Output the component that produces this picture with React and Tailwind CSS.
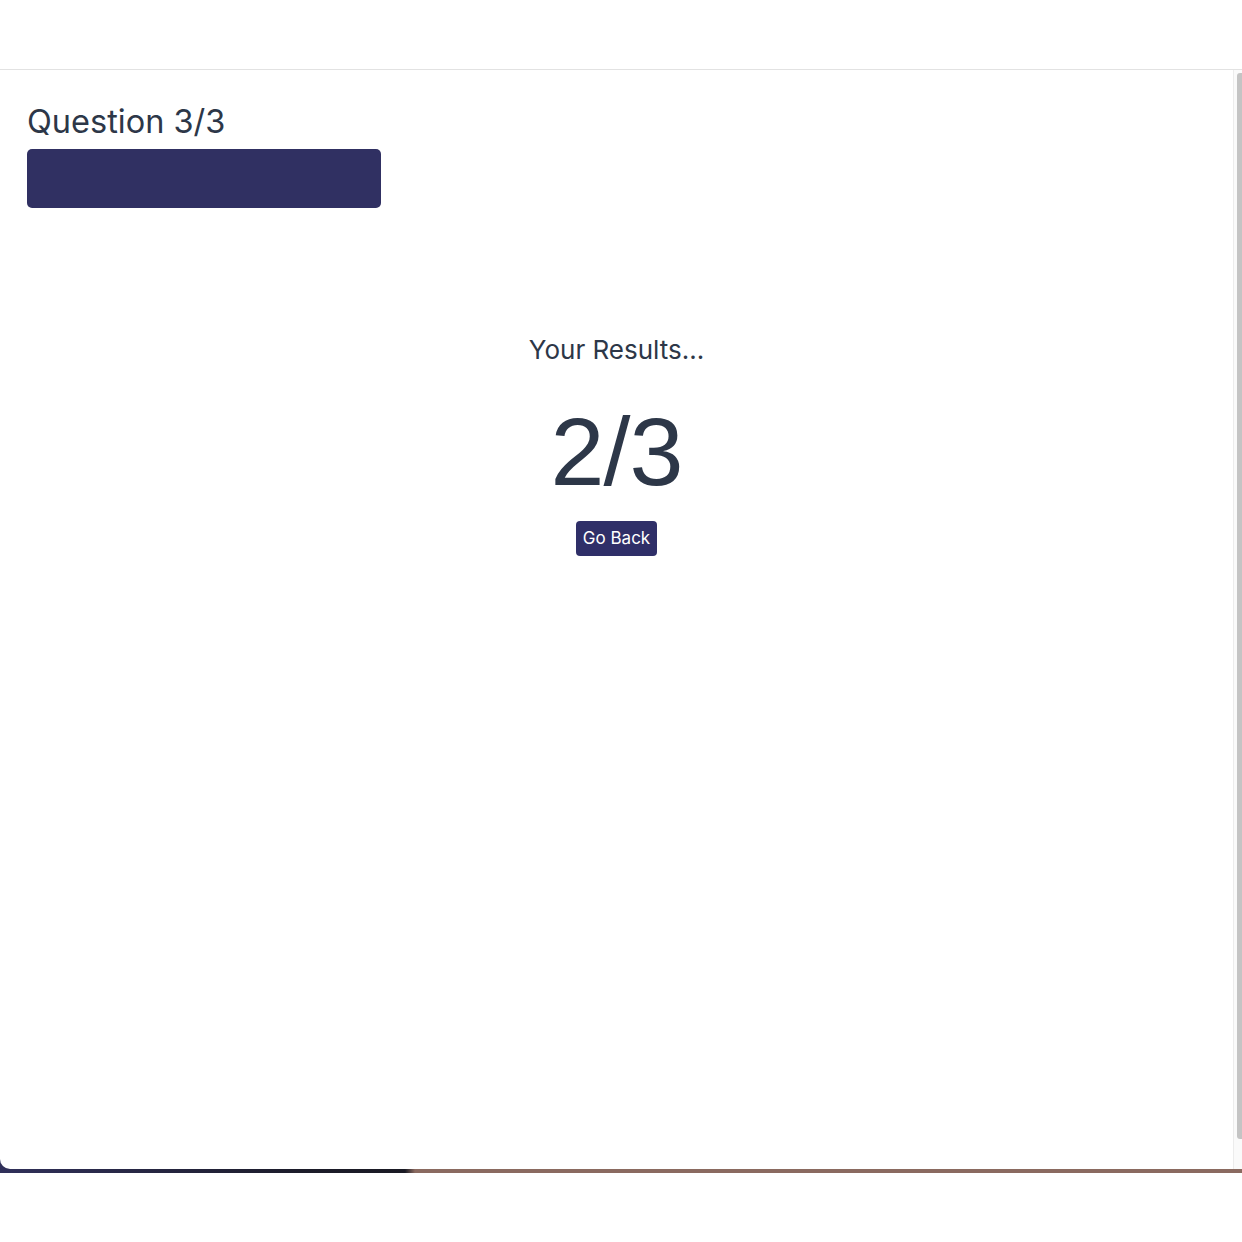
export default function App() {
  const font = { fontFamily: 'Inter, "Liberation Sans", sans-serif' };
  return (
    <div className="w-[1242px] h-[1242px] bg-white flex flex-col" style={font}>
      <div className="h-[70px] shrink-0 border-b border-[#e2e2e2]" />
      <div className="flex h-[1103px] bg-[linear-gradient(to_right,#30305a_0px,#1c1c2a_300px,#1a1a24_405px,#8a6a60_415px,#8a6a60_100%)] pb-[4px]">
        <div className="flex-1 flex bg-white rounded-bl-[10px]">
          <div className="flex-1 flex flex-col pl-[27px] pt-[32px] text-[#2d3748]">
            <div className="text-[32.5px] leading-[40px]">Question 3/3</div>
            <div className="w-[354px] h-[59px] mt-[7px] rounded-[5px] bg-[#303062]" />
            <div className="flex flex-col items-center -ml-[27px] mt-[126px]">
              <div className="text-[26px] leading-[32px]">Your Results...</div>
              <div className="text-[97px] leading-[112px] mt-[30px] tracking-[-1px] font-['Liberation_Sans',sans-serif]">2/3</div>
              <button className="mt-[13px] h-[35px] px-[7px] rounded-[4px] bg-[#2f2f68] text-white text-[17px]">Go Back</button>
            </div>
          </div>
          <div className="w-[9px] flex border-l border-[#ececec] bg-[#fafafa] pt-[3px] pb-[30px]">
            <div className="ml-[3px] w-[5px] rounded-l-[3px] bg-[#c4c4c4]" />
          </div>
        </div>
      </div>
    </div>
  );
}
